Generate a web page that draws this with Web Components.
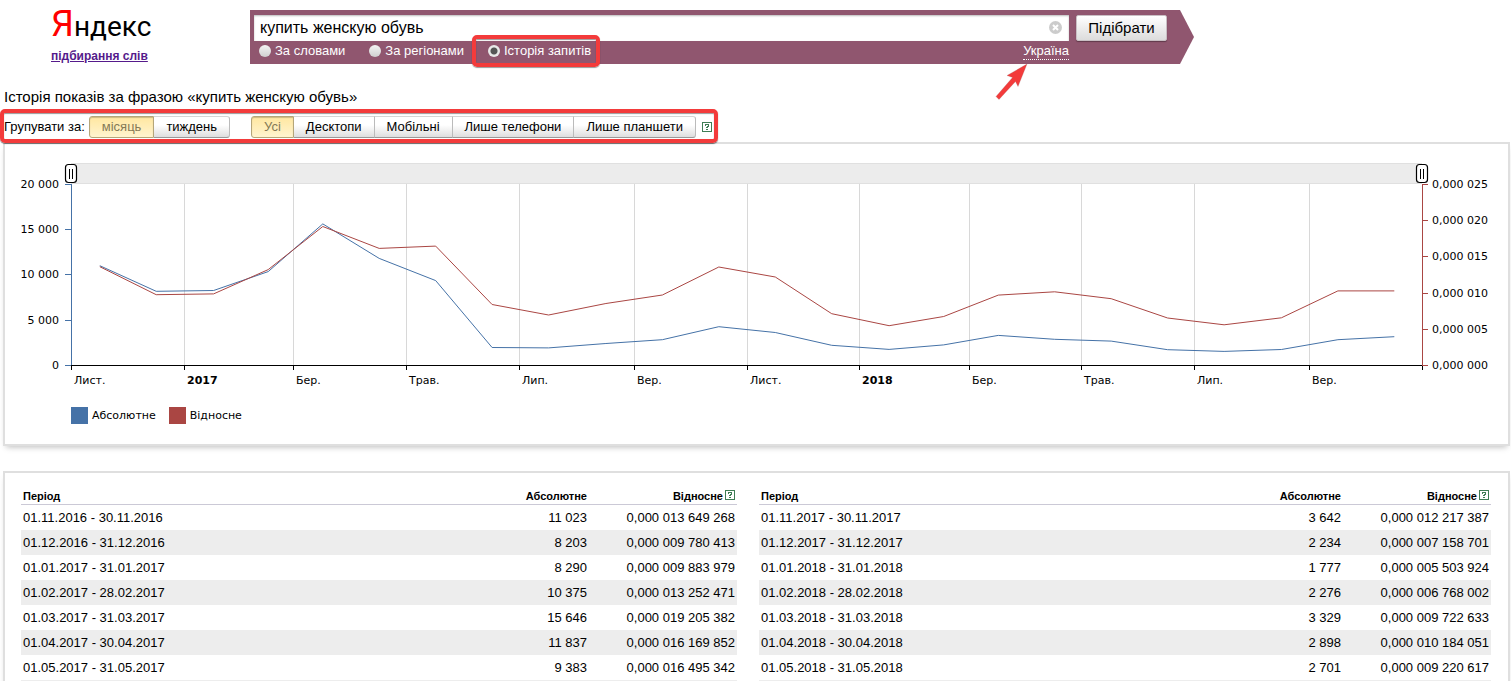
<!DOCTYPE html>
<html lang="uk">
<head>
<meta charset="utf-8">
<title>Підбирання слів</title>
<style>
  html, body { margin: 0; height: 100%; overflow: hidden; background: #fff; }
  body { font: 13px/16px "Liberation Sans", Arial, sans-serif; color: #000; }
</style>
</head>
<body>
<word-stat-page></word-stat-page>

<script>
const define = (name, html, setup) => customElements.define(name, class extends HTMLElement {
  constructor() {
    super();
    this.attachShadow({ mode: 'open' }).innerHTML = html;
  }
  connectedCallback() { if (setup) setup(this, this.shadowRoot); }
});

const DAY = 86400000;
const START = Date.UTC(2016, 10, 1);
const END = Date.UTC(2018, 10, 1);
/* Monthly shows from November 2016; relative values carry nine digits after "0,000". */
const ABSOLUTE = [11023, 8203, 8290, 10375, 15646, 11837, 9383, 1990, 1950, 2430, 2850, 4290,
                  3642, 2234, 1777, 2276, 3329, 2898, 2701, 1750, 1560, 1770, 2850, 3180];
const RELATIVE = [13649268, 9780413, 9883979, 13252471, 19205382, 16169852, 16495342, 8430000, 6980000, 8560000, 9740000, 13600000,
                  12217387, 7158701, 5503924, 6768002, 9722633, 10184051, 9220617, 6560000, 5620000, 6590000, 10300000, 10300000];
const group = n => String(n).replace(/\B(?=(\d{3})+$)/g, ' ');
const monthStart = i => Date.UTC(2016, 10 + i, 1);

/* Logo */
define('yandex-logo', `
<style>
  :host { display: block; padding-left: 51px; }
  .brand { display: block; height: 48px; font: 28px/48px Roboto, "Open Sans", sans-serif; color: #000; text-decoration: none; white-space: nowrap; }
  .brand span { font-size: 36px; color: #f00; }
  .service { display: block; font-size: 12px; font-weight: bold; line-height: 16px; color: #551a8b; white-space: nowrap; }
</style>
<a class="brand" href="#"><span>Я</span>ндекс</a>
<a class="service" href="#">підбирання слів</a>`);

/* Radio with a caption; the "marked" attribute draws the red frame round it */
define('mode-option', `
<style>
  :host { display: block; position: relative; }
  label { display: flex; align-items: center; gap: 4px; color: #fff; line-height: 16px; white-space: nowrap; }
  input { appearance: none; box-sizing: border-box; width: 12px; height: 12px; margin: 0; border-radius: 50%; background: linear-gradient(#f4f4f4, #cfcfcf); }
  input:checked { background: radial-gradient(circle, #555 0 3px, #e8e8e8 4px); }
  :host([marked])::after { content: ""; position: absolute; inset: -8px -9px -8px -16px; border: 4px solid #f33b3b; border-radius: 5px; box-shadow: 0 1px 1px #0006, inset 0 1px 1px #0006; pointer-events: none; }
</style>
<label><input type="radio" name="mode"><slot></slot></label>`, (host, root) => {
  root.querySelector('input').checked = host.hasAttribute('checked');
});

define('search-bar', `
<style>
  :host { display: grid; grid-template-columns: 1fr auto; align-content: start; column-gap: 7px; height: 54px; box-sizing: border-box; padding: 5px 27px 0 4px; position: relative; }
  .shape { position: absolute; inset: 0; background: #90566f; clip-path: polygon(0 0, calc(100% - 14px) 0, 100% 50%, calc(100% - 14px) 100%, 0 100%); }
  .field, .submit, .modes { position: relative; }
  .field { display: flex; }
  .field input { flex: 1; min-width: 0; height: 26px; box-sizing: border-box; margin: 0; padding: 0 30px 0 6px; border: 0; border-radius: 0; outline: 0; background: #fff; box-shadow: inset 0 1px 2px #0004; font: 16px/26px "Liberation Sans", Arial, sans-serif; color: #000; }
  .clear { position: absolute; top: 6px; right: 7px; width: 13px; height: 13px; padding: 0; border: 0; background: none; }
  .clear svg { display: block; }
  .submit { box-sizing: border-box; width: 91px; height: 26px; padding: 0; border: 1px solid #c9bfc4; border-radius: 2px; background: linear-gradient(#fff, #dcdcdc); font: 15px/24px "Liberation Sans", Arial, sans-serif; color: #000; box-shadow: 0 1px 1px #0005; }
  .modes { display: flex; align-items: center; gap: 24px; height: 20px; padding-left: 5px; }
  .country { position: relative; margin-left: auto; }
  .country a { display: block; line-height: 16px; color: #fff; text-decoration: none; border-bottom: 1px dotted #fff; }
  .arrow { position: absolute; top: 13px; right: 39px; pointer-events: none; overflow: visible; }
</style>
<div class="shape"></div>
<div class="field">
  <input type="text" aria-label="Запит" value="купить женскую обувь">
  <button class="clear" type="button" aria-label="Очистити"><svg width="13" height="13" viewBox="0 0 13 13"><circle cx="6.5" cy="6.5" r="6.5" fill="#ccc"/><path d="M4 4l5 5M9 4l-5 5" stroke="#fff" stroke-width="2"/></svg></button>
</div>
<button class="submit" type="button">Підібрати</button>
<div class="modes">
  <mode-option>За словами</mode-option>
  <mode-option>За регіонами</mode-option>
  <mode-option checked marked>Історія запитів</mode-option>
  <div class="country">
    <a href="#">Україна</a>
    <svg class="arrow" width="36" height="44" viewBox="0 0 36 44"><path d="M33 8 13 19.500 18.500 21.500 2 40.500 5 43.500 21.500 25.500 24 30.500Z" fill="#f33b3b" stroke="#9a6a6a" stroke-opacity=".4" stroke-width=".6"/></svg>
  </div>
</div>`, (host, root) => {
  /* the radios sit in separate shadow trees, so exclusivity is handled here */
  const options = [...root.querySelectorAll('mode-option')];
  options.forEach(o => o.addEventListener('click', () => options.forEach(p => {
    p.shadowRoot.querySelector('input').checked = p === o;
  })));
});

define('help-mark', `
<style>
  :host { display: inline-block; width: 10px; height: 10px; }
  a, svg { display: block; }
</style>
<a href="#" aria-label="Довідка"><svg width="10" height="10" viewBox="0 0 10 10" shape-rendering="crispEdges"><path d="M0 0h10v10H0zM1 1v8h8V1z" fill="#3f7d55" fill-rule="evenodd"/><path d="M3 2h4v1H3zM3 3h1v1H3zM6 3h1v1H6zM5 4h2v1H5zM4 5h2v1H4zM4 7h2v1H4z" fill="#3f7d55"/></svg></a>`);

define('toggle-group', `
<style>
  :host { display: flex; }
  ::slotted(button) { box-sizing: border-box; height: 22px; margin: 0; padding: 0 12px; border: 1px solid #bbb; border-left-width: 0; border-top-color: #d5d5d5; border-bottom-color: #999; border-radius: 0; background: linear-gradient(#fff, #fff 40%, #dedede); font: 13px/20px "Liberation Sans", Arial, sans-serif; color: #000; white-space: nowrap; }
  ::slotted(button:first-child) { border-left-width: 1px; border-radius: 3px 0 0 3px; }
  ::slotted(button:last-child) { border-radius: 0 3px 3px 0; }
  ::slotted(button[aria-pressed="true"]) { background: linear-gradient(#ffe7a0, #fff4cf); border-color: #b5a679; color: #857a55; box-shadow: inset 0 1px 1px #0003; }
</style>
<slot></slot>`);

define('filter-toolbar', `
<style>
  :host { position: relative; z-index: 1; display: flex; align-items: center; box-sizing: border-box; width: fit-content; height: 34px; margin-bottom: -1px; padding: 2px 2px 0 0; border: 4px solid #f33b3b; border-radius: 5px; box-shadow: 0 1px 1px #0008, inset 0 1px 1px #0006; }
  .caption { margin-right: 4px; white-space: nowrap; }
  .devices { margin: 0 6px 0 21px; }
</style>
<span class="caption">Групувати за:</span>
<toggle-group>
  <button type="button" aria-pressed="true">місяць</button><button type="button">тиждень</button>
</toggle-group>
<toggle-group class="devices">
  <button type="button" aria-pressed="true">Усі</button><button type="button">Десктопи</button><button type="button">Мобільні</button><button type="button">Лише телефони</button><button type="button">Лише планшети</button>
</toggle-group>
<help-mark></help-mark>`);

define('content-panel', `
<style>
  :host { display: block; margin: 0 1px 0 3px; border: 2px solid #dfdfdf; background: #fff; box-shadow: 0 4px 6px -3px #0004; }
</style>
<slot></slot>`);

define('history-chart', `
<style>
  :host { display: block; padding-bottom: 20px; font: 11px/17px "DejaVu Sans", Verdana, sans-serif; }
  svg { display: block; width: 100%; height: 251px; }
  text { fill: #000; }
  .end { text-anchor: end; }
  .legend { display: flex; gap: 13px; margin: 12px 0 0 66px; padding: 0; list-style: none; }
  .legend li { display: flex; gap: 4px; }
  .legend i { width: 17px; height: 17px; background: #4572a7; }
  .legend .relative { background: #aa4643; }
</style>
<svg role="img" aria-label="Історія показів"></svg>
<ul class="legend"><li><i></i>Абсолютне</li><li><i class="relative"></i>Відносне</li></ul>`, (host, root) => {
  const svg = root.querySelector('svg');
  const TOP = 40, BOTTOM = 221, LEFT = 66, BLUE = '#4572a7', RED = '#aa4643';
  const draw = () => {
    const right = host.clientWidth - 86;
    const x = t => LEFT + (t - START) / (END - START) * (right - LEFT);
    const y = share => BOTTOM - share * (BOTTOM - TOP);
    const snap = v => Math.ceil(v - .5);
    const bar = (bx, by, w, h, c) => `<rect x="${Math.round(bx)}" y="${snap(by)}" width="${w}" height="${h}" fill="${c}"/>`;
    const line = (data, max, c) => `<polyline fill="none" stroke="${c}" points="${data.map((v, i) =>
      `${(x((monthStart(i) + monthStart(i + 1)) / 2) + 1).toFixed(1)},${(y(v / max) + .5).toFixed(1)}`).join(' ')}"/>`;
    const handle = hx => `<g><rect x="${hx - 5.5}" y="20.500" width="11" height="18" rx="3" fill="#fff" stroke="#000" stroke-width="1.200"/><path d="M${hx - 1.5} 25v10M${hx + 1.5} 25v10" stroke="#000"/></g>`;
    let out = bar(LEFT, 19, right - LEFT, 21, '#ececec') + bar(LEFT, 19, right - LEFT, 1, '#e0e0e0') + bar(LEFT, 39, right - LEFT, 1, '#e0e0e0');
    const names = ['Лист.', '2017', 'Бер.', 'Трав.', 'Лип.', 'Вер.', 'Лист.', '2018', 'Бер.', 'Трав.', 'Лип.', 'Вер.'];
    names.forEach((name, i) => {
      const gx = x(monthStart(i * 2));
      if (i) out += bar(gx, TOP, 1, BOTTOM - TOP, '#d8d8d8');
      out += bar(gx, BOTTOM, 1, 5, '#000');
      out += `<text x="${Math.round(gx) + 3}" y="240"${/^\d/.test(name) ? ' font-weight="bold"' : ''}>${name}</text>`;
    });
    out += bar(LEFT, BOTTOM, right - LEFT, 1, '#000') + bar(right, BOTTOM, 1, 5, '#000');
    out += bar(LEFT, TOP, 1, BOTTOM - TOP, BLUE) + bar(right, TOP, 1, BOTTOM - TOP, RED);
    for (let i = 0; i <= 4; i++) {
      out += bar(LEFT - 6, y(i / 4), 6, 1, BLUE) + `<text class="end" x="${LEFT - 12}" y="${snap(y(i / 4)) + 4}">${group(i * 5000)}</text>`;
    }
    for (let i = 0; i <= 5; i++) {
      out += bar(right, y(i / 5), 6, 1, RED) + `<text x="${right + 10}" y="${snap(y(i / 5)) + 4}">0,000 ${String(i * 5).padStart(3, '0')}</text>`;
    }
    out += line(ABSOLUTE, 20000, BLUE) + line(RELATIVE, 25000000, RED) + handle(LEFT) + handle(right);
    svg.innerHTML = out;
  };
  draw();
  new ResizeObserver(draw).observe(host);
});

/* Seven months of figures, starting from the month numbered in "from" */
define('period-table', `
<style>
  :host { display: block; }
  table { width: 100%; border-collapse: separate; border-spacing: 0; table-layout: fixed; }
  th { padding: 2px 2px 0; border-bottom: 1px solid #cbc9d6; font-size: 11px; line-height: 15px; text-align: right; }
  td { height: 25px; padding: 0 2px; text-align: right; }
  th:first-child, td:first-child { text-align: left; }
  th:nth-child(2) { width: 120px; }
  th:nth-child(3) { width: 144px; }
  tr:nth-child(even) td { background: #ededed; }
  help-mark { margin-left: 2px; vertical-align: 0; }
</style>
<table>
  <thead><tr><th>Період</th><th>Абсолютне</th><th>Відносне<help-mark></help-mark></th></tr></thead>
  <tbody></tbody>
</table>`, (host, root) => {
  const from = Number(host.getAttribute('from'));
  const date = t => new Date(t).toISOString().slice(0, 10).split('-').reverse().join('.');
  let rows = '';
  for (let i = from; i < from + 7; i++) {
    const rel = group(String(RELATIVE[i]).padStart(9, '0'));
    rows += `<tr><td>${date(monthStart(i))} - ${date(monthStart(i + 1) - DAY)}</td><td>${group(ABSOLUTE[i])}</td><td>0,000 ${rel}</td></tr>`;
  }
  root.querySelector('tbody').innerHTML = rows + '<tr><td></td><td></td><td></td></tr>';
});

define('word-stat-page', `
<style>
  :host { display: block; }
  header { display: grid; grid-template-columns: 250px 944fr 317fr; height: 64px; }
  search-bar { margin-top: 10px; }
  h1 { margin: 24px 0 3px 4px; font-size: 15px; font-weight: normal; line-height: 18px; }
  main { display: block; }
  .tables { display: grid; grid-template-columns: 716fr 732fr; column-gap: 22px; padding: 14px 17px 20px 16px; }
  .second { margin-top: 25px; }
</style>
<header><yandex-logo></yandex-logo><search-bar></search-bar></header>
<main>
  <h1>Історія показів за фразою «купить женскую обувь»</h1>
  <filter-toolbar></filter-toolbar>
  <content-panel><history-chart></history-chart></content-panel>
  <content-panel class="second"><div class="tables"><period-table from="0"></period-table><period-table from="12"></period-table></div></content-panel>
</main>`);
</script>
</body>
</html>
